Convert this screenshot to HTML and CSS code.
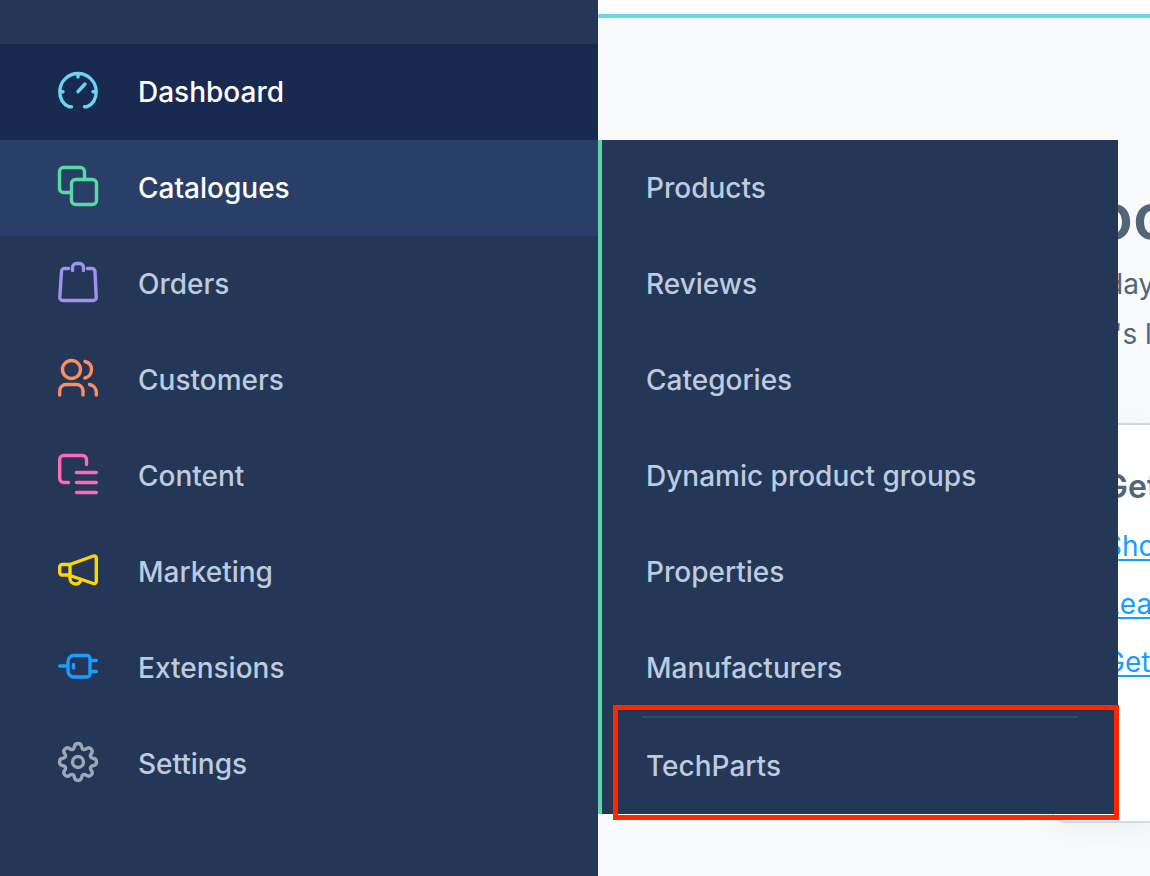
FILE: index.html
```html
<!DOCTYPE html>
<html lang="en">
<head>
<meta charset="utf-8">
<title>Administration</title>
<link rel="stylesheet" href="styles.css">
</head>
<body>
<div class="app">
  <aside class="sidebar">
    <nav class="nav" aria-label="Main menu">
      <a class="nav-item is-active c-cyan" href="#">
        <svg class="icon" viewBox="0 0 40 40"><path d="M13.500 36.800H11C5 34 1.800 28 1.800 21.700A18.200 18.200 0 0 1 38.200 21.700C38.200 28 35 34 29 36.800H26.500M20 3.500V7M2 21.700H5M38 21.700H35M20 21.700L27 14"/></svg>
        <span>Dashboard</span></a>
      <div class="nav-group">
        <a class="nav-item is-open c-green" href="#">
          <svg class="icon" viewBox="0 0 40 40"><path d="M13 26.500H5.500a4 4 0 0 1-4-4V5.500a4 4 0 0 1 4-4H22.500a4 4 0 0 1 4 4V13"/><rect x="13.500" y="13.500" width="25" height="25" rx="4"/></svg>
          <span>Catalogues</span></a>
        <div class="flyout">
          <a class="sub-item" href="#">Products</a>
          <a class="sub-item" href="#">Reviews</a>
          <a class="sub-item" href="#">Categories</a>
          <a class="sub-item" href="#">Dynamic product groups</a>
          <a class="sub-item" href="#">Properties</a>
          <a class="sub-item" href="#">Manufacturers</a>
          <hr class="divider">
          <a class="sub-item" href="#">TechParts</a>
          <div class="marker"></div>
        </div>
      </div>
      <a class="nav-item c-purple" href="#">
        <svg class="icon" viewBox="0 0 40 40"><path d="M10.500 6.500H6.500a3 3 0 0 0-3 3L1.800 35a3 3 0 0 0 3 3.500H35.200a3 3 0 0 0 3-3.500L37 9.500a3 3 0 0 0-3-3H29.500M14.500 8.500V6a4 4 0 0 1 4-4.500H21.500a4 4 0 0 1 4 4.500V8.500"/></svg>
        <span>Orders</span></a>
      <a class="nav-item c-orange" href="#">
        <svg class="icon" viewBox="0 0 40 40"><circle cx="13.500" cy="11.500" r="9"/><path d="M27 3.500C31 4.500 33.500 7.500 33.500 11.500S31 19 27 20M1.700 37V33a6.500 6.500 0 0 1 6.500-6.500H18.500a6.500 6.500 0 0 1 6.500 6.500V37M31.500 26.500A8 8 0 0 1 38.300 34V37"/></svg>
        <span>Customers</span></a>
      <a class="nav-item c-pink" href="#">
        <svg class="icon" viewBox="0 0 40 40"><path d="M10.500 28.500H5.700a4 4 0 0 1-4-4V5.500a4 4 0 0 1 4-4H24.500a4 4 0 0 1 4 4V10.500M18.500 18.500H38.300M18.500 28.500H38.300M18.500 38.500H38.300"/></svg>
        <span>Content</span></a>
      <a class="nav-item c-yellow" href="#">
        <svg class="icon" viewBox="0 0 40 40"><path d="M12 14.500H4.200a2.500 2.500 0 0 0-2.500 2.500V22.500a2.500 2.500 0 0 0 2.500 2.500H12M12 14.500L35.300 6a2.300 2.300 0 0 1 3 2V31.500a2.300 2.300 0 0 1-3 2L12 25.500ZM12 25V28.500a5.500 5.500 0 0 0 5.500 5.500C20.500 34 22.500 32 23 29.500"/></svg>
        <span>Marketing</span></a>
      <a class="nav-item c-blue" href="#">
        <svg class="icon" viewBox="0 0 40 40"><path d="M1.700 20H10M16 9.500H29a3 3 0 0 1 3 3V28a3 3 0 0 1-3 3H16a6 6 0 0 1-6-6V15.500a6 6 0 0 1 6-6ZM32 14.500H38.300M32 25.500H38.300M15.500 18.500V22"/></svg>
        <span>Extensions</span></a>
      <a class="nav-item c-gray" href="#">
        <svg class="icon" viewBox="0 0 40 40"><circle cx="20" cy="20" r="5.500"/><path d="M20 1.500c2 0 3.500 1.500 3.700 3.600.3 2.400 2.500 3.200 4.400 1.700 1.700-1.300 3.700-1.300 5 .1s1.400 3.300.1 5c-1.500 1.900-.7 4.100 1.700 4.400 2.100.2 3.600 1.700 3.600 3.700s-1.500 3.500-3.600 3.700c-2.400.3-3.200 2.500-1.700 4.400 1.300 1.700 1.300 3.700-.1 5s-3.300 1.400-5 .1c-1.900-1.500-4.100-.7-4.400 1.700-.2 2.100-1.700 3.600-3.700 3.600s-3.500-1.500-3.700-3.600c-.3-2.400-2.500-3.200-4.400-1.700-1.700 1.300-3.700 1.300-5-.1s-1.400-3.300-.1-5c1.500-1.900.7-4.100-1.700-4.400-2.100-.2-3.600-1.700-3.600-3.700s1.500-3.500 3.600-3.700c2.400-.3 3.200-2.500 1.700-4.400-1.300-1.700-1.300-3.700.1-5s3.300-1.400 5-.1c1.900 1.500 4.100.7 4.400-1.700.2-2.100 1.700-3.600 3.700-3.600Z"/></svg>
        <span>Settings</span></a>
    </nav>
  </aside>
  <main class="main">
    <header class="topbar"></header>
    <section class="welcome">
      <h1>oo</h1>
      <p>day</p>
      <p class="outro">'s l</p>
    </section>
    <section class="card">
      <h2>Get</h2>
      <a href="#">Shop</a>
      <a href="#">Lear</a>
      <a href="#">Get s</a>
    </section>
  </main>
</div>
</body>
</html>
```

FILE: styles.css
```css
* { box-sizing: border-box; }

body {
  margin: 0;
  font-family: Inter, "Liberation Sans", sans-serif;
  font-size: 28px;
  background: #f9fafc;
}

.app { display: flex; min-height: 100vh; overflow: hidden; }

/* Sidebar */
.sidebar {
  flex: 0 0 52%;
  background: #243757;
  padding-top: 44px;
  position: relative;
  z-index: 2;
}

.nav-group { position: relative; }

.nav-item, .sub-item {
  display: flex;
  align-items: center;
  height: 96px;
  color: #bccbde;
  font-weight: 500;
  text-decoration: none;
  white-space: nowrap;
}

.nav-item { gap: 40px; padding-left: 58px; }
.nav-item span { color: #bccbde; }
.is-active { background: #192a50; }
.is-open { background: #2a3f67; }
.nav-item.is-active span, .nav-item.is-open span { color: #fff; }

.icon {
  width: 40px;
  height: 40px;
  margin-bottom: 4px;
  overflow: visible;
  fill: none;
  stroke: currentColor;
  stroke-width: 3.4;
  stroke-linecap: round;
  stroke-linejoin: round;
}

.c-cyan { color: #69d5f2; }
.c-green { color: #57d9a3; }
.c-purple { color: #a092f0; }
.c-orange { color: #ff8d61; }
.c-pink { color: #ff68b4; }
.c-yellow { color: #ffd500; }
.c-blue { color: #189eff; }
.c-gray { color: #9aa8b5; }

/* Submenu */
.flyout {
  position: absolute;
  top: 0;
  left: 100%;
  width: 520px;
  background: #243757;
  border-left: 4px solid #57d9a3;
}

.sub-item { padding-left: 44px; }

.divider {
  height: 2px;
  margin: 0 40px;
  border: 0;
  background: #33476a;
}

.marker {
  position: absolute;
  top: 565px;
  left: 11px;
  right: -1px;
  bottom: -6px;
  border: 5px solid #ff2600;
  pointer-events: none;
}

/* Page content */
.main { flex: 1; min-width: 0; white-space: nowrap; color: #52667a; }

.topbar { height: 18px; background: #fff; border-bottom: 4px solid #69d5f2; }

.welcome { padding: 162px 0 64px 496px; }
.welcome h1 { margin: 0 0 7px; font-size: 64px; line-height: 72px; font-weight: 600; }
.welcome p { margin: 0; padding-left: 12px; line-height: 50px; }
.welcome .outro { padding-left: 20px; }

.card {
  display: flex;
  flex-direction: column;
  align-items: flex-start;
  height: 400px;
  margin-left: 452px;
  padding: 40px 52px;
  background: #fff;
  border: 2px solid #d1d9e0;
  border-right: 0;
  border-radius: 16px 0 0 16px;
  box-shadow: 0 6px 32px rgba(0, 0, 0, 0.05);
}
.card h2 { margin: 0 0 8px; font-size: 32px; line-height: 44px; font-weight: 600; }
.card a {
  color: #189eff;
  line-height: 58px;
  text-underline-offset: 3px;
  text-decoration-thickness: 2px;
}
```
